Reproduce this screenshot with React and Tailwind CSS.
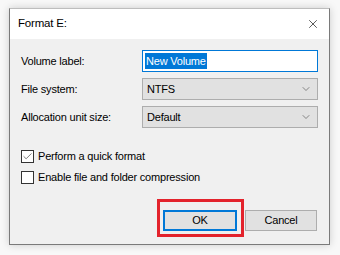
import { X, ChevronDown, Check } from 'lucide-react';

const FONT = { fontFamily: '"Liberation Sans", Arial, sans-serif' };

function Select({ value }) {
  return (
    <div className="flex h-[22px] w-[176px] items-center justify-between border border-[#adadad] bg-[#e1e1e1] pl-[4px] pr-[5px]">
      <span>{value}</span>
      <ChevronDown size={12} strokeWidth={1.2} className="text-[#444]" />
    </div>
  );
}

function Row({ label, children }) {
  return (
    <div className="flex h-[22px] items-center">
      <div className="w-[121px]">{label}</div>
      {children}
    </div>
  );
}

function CheckRow({ checked, label }) {
  return (
    <div className="flex h-[13px] items-center gap-[4px]">
      <div className="flex h-[13px] w-[13px] items-center justify-center border border-[#333] bg-white">
        {checked && <Check size={11} strokeWidth={1.3} className="text-[#222]" />}
      </div>
      <span>{label}</span>
    </div>
  );
}

export default function App() {
  return (
    <div className="h-[255px] w-[340px] overflow-hidden bg-[#f8f8f8] pl-[9px] pt-[8px] text-[11px] tracking-[-0.2px] text-black" style={FONT}>
      <div className="relative flex h-[237px] w-[321px] flex-col border border-[#7a7a7a] border-t-[#bdbdbd] shadow-[0_0_8px_rgba(0,0,0,0.18)]">
        {/* title bar */}
        <div className="flex h-[30px] items-center justify-between bg-white pl-[8px] pr-[9px]">
          <span className="text-[11.5px]">Format E:</span>
          <X size={14} strokeWidth={1.1} className="text-black" />
        </div>

        {/* body */}
        <div className="flex flex-1 flex-col bg-[#f0f0f0] pl-[11px] pr-[10px] pt-[11px]">
          <div className="flex flex-col gap-[6px]">
            <Row label="Volume label:">
              <div className="flex h-[22px] w-[176px] items-center border border-[#0078d7] bg-white pl-[2px]">
                <span className="bg-[#0078d7] px-[1px] leading-[16px] text-white">New Volume</span>
              </div>
            </Row>
            <Row label="File system:">
              <Select value="NTFS" />
            </Row>
            <Row label="Allocation unit size:">
              <Select value="Default" />
            </Row>
          </div>

          <div className="mt-[22px] flex flex-col gap-[8px]">
            <CheckRow checked label="Perform a quick format" />
            <CheckRow label="Enable file and folder compression" />
          </div>

          <div className="mt-[26px] flex justify-end gap-[8px] pr-[2px]">
            <div className="flex h-[21px] w-[74px] items-center justify-center border-2 border-[#0078d7] bg-[#e1e1e1]">OK</div>
            <div className="flex h-[21px] w-[72px] items-center justify-center border border-[#adadad] bg-[#e1e1e1]">Cancel</div>
          </div>
        </div>

        {/* red highlight annotation */}
        <div className="absolute left-[147px] top-[190px] h-[38px] w-[87px] border-[3px] border-[#e3232c]" />
      </div>
    </div>
  );
}
